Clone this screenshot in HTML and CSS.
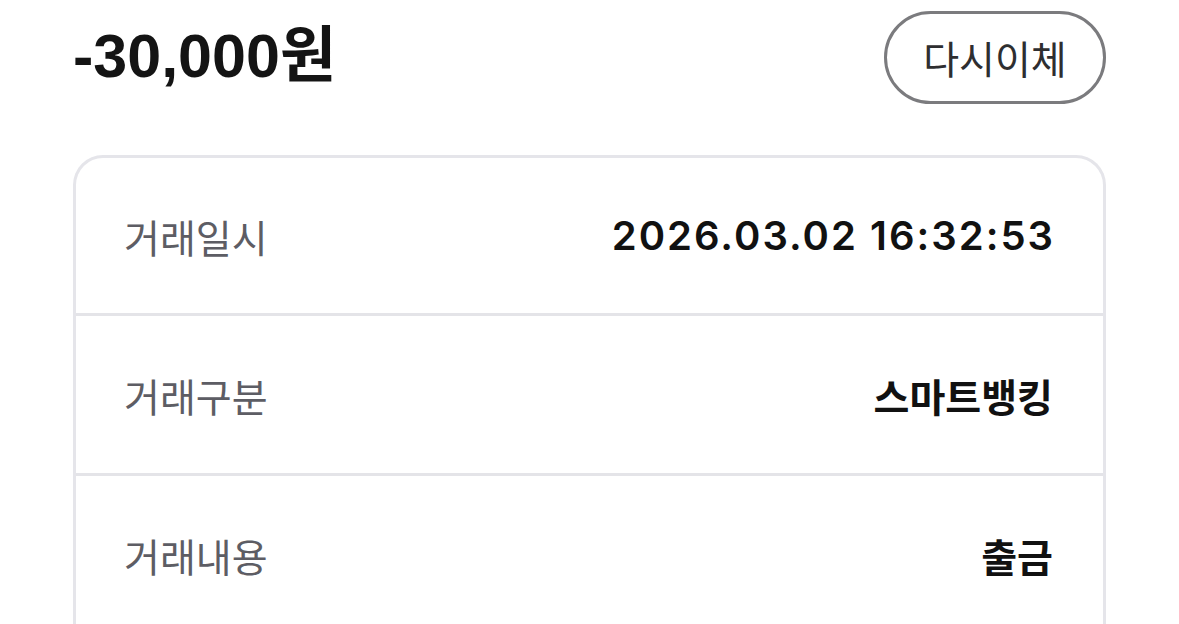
FILE: index.html
```html
<!DOCTYPE html>
<html lang="ko">
<head>
	<meta charset="UTF-8">
	<title>거래상세</title>
	<link rel="stylesheet" href="styles.css">
</head>
<body>
	<div class="page">
		<div class="head">
			<div class="amount">-30,000원</div>
			<button class="again">다시이체</button>
		</div>

		<!-- 거래 상세 카드 -->
		<div class="card">
			<div class="row">
				<span class="label">거래일시</span>
				<span class="value num">2026.03.02 16:32:53</span>
			</div>
			<div class="row">
				<span class="label">거래구분</span>
				<span class="value">스마트뱅킹</span>
			</div>
			<div class="row">
				<span class="label">거래내용</span>
				<span class="value">출금</span>
			</div>
		</div>
	</div>
</body>
</html>
```

FILE: styles.css
```css
body {
	margin: 0;
	background: #fff;
	font-family: Inter, "Noto Sans CJK KR", sans-serif;
	color: #111;
}
.page {
	padding: 11px 73px 0 73px;
}
.head {
	display: flex;
	justify-content: space-between;
	align-items: center;
	height: 93px;
	margin-bottom: 51px;
}
.amount {
	font-family: "Liberation Sans", "Noto Sans CJK KR", sans-serif;
	font-size: 61px;
	font-weight: 700;
	margin-top: -15px;
	color: #141414;
}
.again {
	box-sizing: border-box;
	width: 222px;
	height: 93px;
	border: 3px solid #7b7b7e;
	border-radius: 47px;
	background: #fff;
	color: #2e2e30;
	font-family: "Noto Sans CJK KR", sans-serif;
	font-size: 39px;
	padding: 0 0 2px 0;
}
.card {
	border: 3px solid #e5e5ea;
	border-bottom: none;
	border-radius: 30px 30px 0 0;
}
.row {
	display: flex;
	justify-content: space-between;
	align-items: center;
	height: 155px;
	padding: 0 50px 0 48px;
}
.row + .row {
	border-top: 3px solid #e4e4e8;
	height: 157px;
}
.label {
	font-family: "Noto Sans CJK KR", sans-serif;
	font-size: 39px;
	color: #5d5d64;
}
.value {
	font-family: "Noto Sans CJK KR", sans-serif;
	font-size: 39px;
	font-weight: 700;
	color: #111;
}
.value.num {
	font-family: Inter, sans-serif;
	font-size: 40px;
	font-weight: 600;
	letter-spacing: 2px;
	margin-right: -2px;
}
```
